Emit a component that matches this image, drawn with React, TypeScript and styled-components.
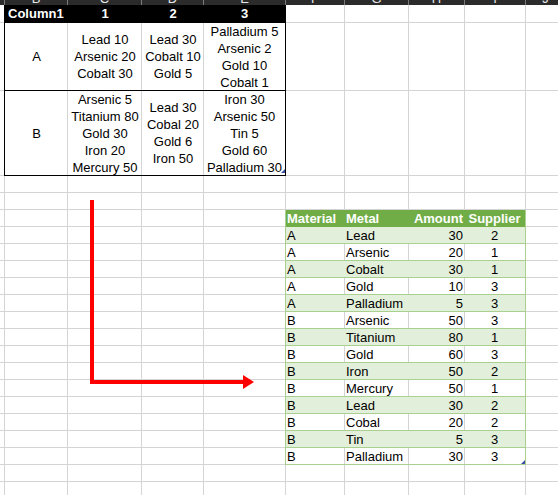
import React from "react";
import styled, { createGlobalStyle } from "styled-components";

const GlobalStyle = createGlobalStyle`
  html, body { margin: 0; padding: 0; background: #fff; }
  body {
    font-family: "Liberation Sans", Arial, sans-serif;
    font-size: 13px;
    color: #000;
    overflow: hidden;
  }
`;

const COLS = [5, 63, 74, 62, 82, 59, 64, 56, 61, 40];
const ROWS = [5, 18, 68, 85, ...Array(19).fill(17)];
const LETTERS = ["A", "B", "C", "D", "E", "F", "G", "H", "I", "J"];

const Sheet = styled.div`
  display: grid;
  grid-template-columns: ${COLS.map((c) => `${c}px`).join(" ")};
  grid-template-rows: ${ROWS.map((r) => `${r}px`).join(" ")};
  width: 558px;
  height: 495px;
  overflow: hidden;
`;

const ColHeader = styled.div<{ $col: number }>`
  grid-row: 1;
  grid-column: ${(p) => p.$col};
  background: #2b2b2b;
  border-right: 1px solid #7a7a7a;
  overflow: hidden;
  display: flex;
  justify-content: center;
  align-items: flex-start;
  color: #e6e6e6;
  font-size: 13px;
  line-height: 13px;
  & > span { margin-top: -8px; }
`;

const GridCell = styled.div<{ $row: number; $col: number }>`
  grid-row: ${(p) => p.$row};
  grid-column: ${(p) => p.$col};
  background: #fff;
  border-right: 1px solid #d4d4d4;
  border-bottom: 1px solid #d4d4d4;
`;

/* ---------- Pivot-like table (Column1) ---------- */
const PivotTable = styled.div`
  grid-column: 2 / 6;
  grid-row: 2 / 5;
  margin-left: -1px;
  position: relative;
  z-index: 1;
  display: grid;
  grid-template-columns: 63px 74px 62px 81px;
  grid-template-rows: 18px 68px 85px;
  border-left: 1px solid #000;
  border-right: 1px solid #000;
  &::after {
    content: "";
    position: absolute;
    right: 0;
    bottom: 3px;
    width: 0;
    height: 0;
    border-left: 4px solid transparent;
    border-bottom: 4px solid #3c4fa5;
  }
`;

const PivotHead = styled.div<{ $align?: "left" | "center" }>`
  background: #000;
  color: #fff;
  font-weight: bold;
  line-height: 17px;
  text-align: ${(p) => p.$align ?? "center"};
  padding-left: ${(p) => (p.$align === "left" ? "3px" : "0")};
  white-space: nowrap;
`;

const PivotCell = styled.div`
  border-bottom: 1px solid #000;
  display: flex;
  flex-direction: column;
  justify-content: center;
  align-items: center;
  line-height: 17px;
  white-space: nowrap;
  overflow: visible;
  min-height: 0;
`;

const Line = styled.div`
  height: 17px;
  flex: none;
`;

/* ---------- Excel table (green) ---------- */
const DataTable = styled.div`
  grid-column: 6 / 10;
  grid-row: 7 / 22;
  margin-left: -1px;
  position: relative;
  z-index: 1;
  display: grid;
  grid-auto-rows: 17px;
  border-left: 1px solid #a9d08e;
  border-right: 1px solid #a9d08e;
  &::after {
    content: "";
    position: absolute;
    right: 0;
    bottom: 1px;
    width: 0;
    height: 0;
    border-left: 4px solid transparent;
    border-bottom: 4px solid #3c4fa5;
  }
`;

const TableRow = styled.div<{ $variant: "head" | "band" | "plain" }>`
  display: grid;
  grid-template-columns: 59px 64px 56px 60px;
  background: ${(p) =>
    p.$variant === "head" ? "#70ad47" : p.$variant === "band" ? "#e2efda" : "transparent"};
  color: ${(p) => (p.$variant === "head" ? "#fff" : "#000")};
  font-weight: ${(p) => (p.$variant === "head" ? "bold" : "normal")};
  border-bottom: ${(p) => (p.$variant === "head" ? "none" : "1px solid #a9d08e")};
  line-height: 17px;
  overflow: hidden;
`;

const TCell = styled.div<{ $align: "left" | "right" | "center" }>`
  text-align: ${(p) => p.$align};
  padding: 0 2px 0 1px;
  white-space: nowrap;
  overflow: hidden;
  height: 16px;
`;

/* ---------- Arrow drawing ---------- */
const ArrowArea = styled.div`
  grid-column: 2 / 6;
  grid-row: 5 / 20;
  position: relative;
  z-index: 2;
  pointer-events: none;
  align-self: start;
  height: 230px;
`;

const pivotRows = [
  {
    label: "A",
    cells: [
      ["Lead 10", "Arsenic 20", "Cobalt 30"],
      ["Lead 30", "Cobalt 10", "Gold 5"],
      ["Palladium 5", "Arsenic 2", "Gold 10", "Cobalt 1"],
    ],
  },
  {
    label: "B",
    cells: [
      ["Arsenic 5", "Titanium 80", "Gold 30", "Iron 20", "Mercury 50"],
      ["Lead 30", "Cobal 20", "Gold 6", "Iron 50"],
      ["Iron 30", "Arsenic 50", "Tin 5", "Gold 60", "Palladium 30"],
    ],
  },
];

const data: [string, string, number, number][] = [
  ["A", "Lead", 30, 2],
  ["A", "Arsenic", 20, 1],
  ["A", "Cobalt", 30, 1],
  ["A", "Gold", 10, 3],
  ["A", "Palladium", 5, 3],
  ["B", "Arsenic", 50, 3],
  ["B", "Titanium", 80, 1],
  ["B", "Gold", 60, 3],
  ["B", "Iron", 50, 2],
  ["B", "Mercury", 50, 1],
  ["B", "Lead", 30, 2],
  ["B", "Cobal", 20, 2],
  ["B", "Tin", 5, 3],
  ["B", "Palladium", 30, 3],
];

export default function App() {
  const cells: React.ReactNode[] = [];
  for (let r = 2; r <= ROWS.length; r++) {
    for (let c = 1; c <= COLS.length; c++) {
      cells.push(<GridCell key={`${r}-${c}`} $row={r} $col={c} />);
    }
  }
  return (
    <>
      <GlobalStyle />
      <Sheet>
        {LETTERS.map((l, i) => (
          <ColHeader key={l} $col={i + 1}>
            <span>{i === 0 ? "" : l}</span>
          </ColHeader>
        ))}
        {cells}

        <PivotTable>
          <PivotHead $align="left">Column1</PivotHead>
          <PivotHead>1</PivotHead>
          <PivotHead>2</PivotHead>
          <PivotHead>3</PivotHead>
          {pivotRows.map((row) => (
            <React.Fragment key={row.label}>
              <PivotCell>
                <Line>{row.label}</Line>
              </PivotCell>
              {row.cells.map((lines, i) => (
                <PivotCell key={i}>
                  {lines.map((t) => (
                    <Line key={t}>{t}</Line>
                  ))}
                </PivotCell>
              ))}
            </React.Fragment>
          ))}
        </PivotTable>

        <DataTable>
          <TableRow $variant="head">
            <TCell $align="left">Material</TCell>
            <TCell $align="left">Metal</TCell>
            <TCell $align="right">Amount</TCell>
            <TCell $align="center">Supplier</TCell>
          </TableRow>
          {data.map((d, i) => (
            <TableRow key={i} $variant={i % 2 === 0 ? "band" : "plain"}>
              <TCell $align="left">{d[0]}</TCell>
              <TCell $align="left">{d[1]}</TCell>
              <TCell $align="right">{d[2]}</TCell>
              <TCell $align="center">{d[3]}</TCell>
            </TableRow>
          ))}
        </DataTable>

        <ArrowArea>
          <svg width="260" height="230" viewBox="0 0 260 230">
            <rect x="85" y="24" width="4" height="184" fill="#ff0000" />
            <rect x="85" y="204" width="154" height="4" fill="#ff0000" />
            <polygon points="238,199 249,206 238,213" fill="#ff0000" />
          </svg>
        </ArrowArea>
      </Sheet>
    </>
  );
}
